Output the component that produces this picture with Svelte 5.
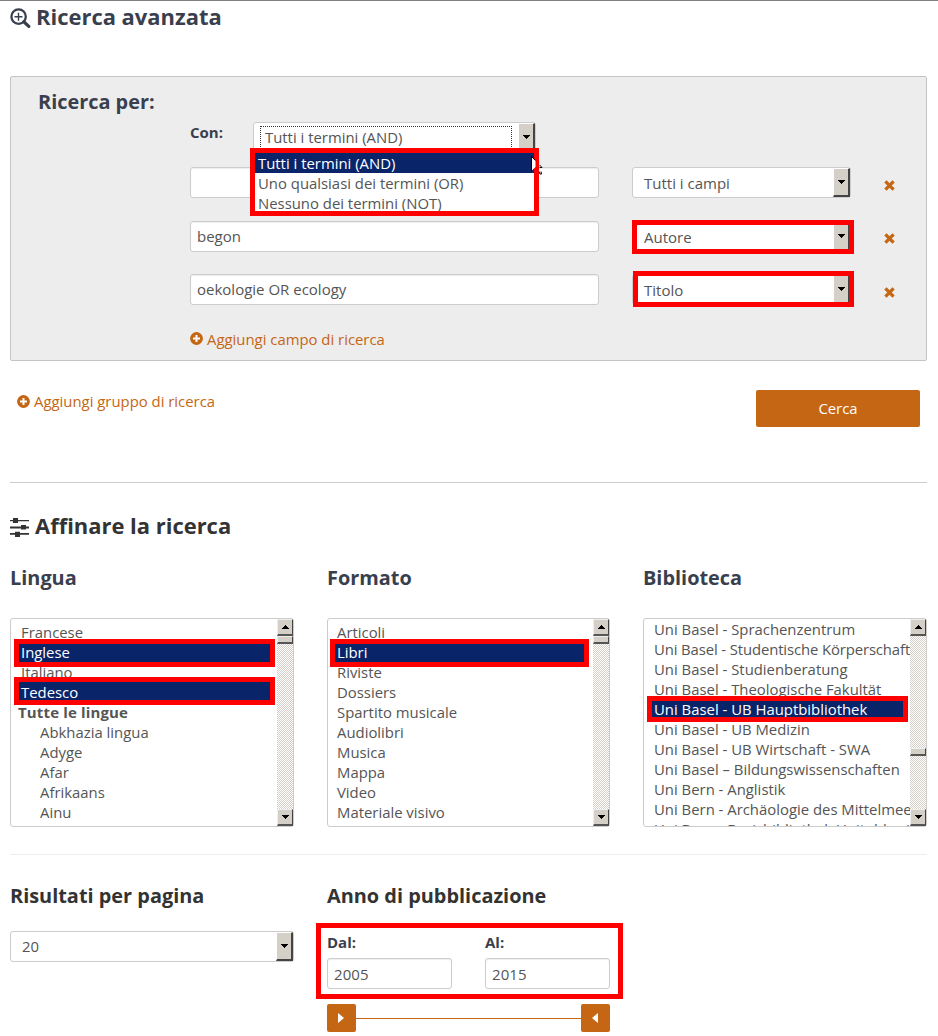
<script>
  const terms = ['Tutti i termini (AND)', 'Uno qualsiasi dei termini (OR)', 'Nessuno dei termini (NOT)'];
  const rows = [
    { value: '', field: 'Tutti i campi', mark: '' },
    { value: 'begon', field: 'Autore', mark: 'author' },
    { value: 'oekologie OR ecology', field: 'Titolo', mark: 'title' }
  ];
  const filters = [
    {
      title: 'Lingua', kind: 'lang', sel: ['Inglese', 'Tedesco'], marks: ['m1', 'm2'],
      items: ['Francese', 'Inglese', 'Italiano', 'Tedesco', '*Tutte le lingue', '>Abkhazia lingua', '>Adyge', '>Afar', '>Afrikaans', '>Ainu']
    },
    {
      title: 'Formato', kind: 'format', sel: ['Libri'], marks: ['m3'],
      items: ['Articoli', 'Libri', 'Riviste', 'Dossiers', 'Spartito musicale', 'Audiolibri', 'Musica', 'Mappa', 'Video', 'Materiale visivo']
    },
    {
      title: 'Biblioteca', kind: 'library', sel: ['Uni Basel - UB Hauptbibliothek'], marks: ['m4'],
      items: ['Uni Basel - Sprachenzentrum', 'Uni Basel - Studentische Körperschaft', 'Uni Basel - Studienberatung', 'Uni Basel - Theologische Fakultät', 'Uni Basel - UB Hauptbibliothek', 'Uni Basel - UB Medizin', 'Uni Basel - UB Wirtschaft - SWA', 'Uni Basel – Bildungswissenschaften', 'Uni Bern - Anglistik', 'Uni Bern - Archäologie des Mittelmee', 'Uni Bern - Basisbibliothek Unitobler (']
    }
  ];
</script>

{#snippet arrow(up)}
  <svg width="7" height="4" viewBox="0 0 7 4" shape-rendering="crispEdges"><path d={up ? 'M3 0h1v1h1v1h1v1h1v1H0V3h1V2h1V1h1z' : 'M0 0h7v1H6v1H5v1H4v1H3V3H2V2H1V1H0z'} fill="#000" /></svg>
{/snippet}

{#snippet plus()}
  <svg class="plus" width="13" height="13" viewBox="0 0 13 13"><circle cx="6.5" cy="6.5" r="6.4" fill="#c56614" /><path d="M6.5 3v7M3 6.5h7" stroke="#fff" stroke-width="2" /></svg>
{/snippet}

<main>
  <h1>
    <svg width="21" height="21" viewBox="0 0 21 21" fill="none" stroke="#3a3f4e"><circle cx="8.6" cy="8.6" r="7.2" stroke-width="2.3" /><path d="M13.8 13.8l5 4.6" stroke-width="3.2" stroke-linecap="round" /><path d="M8.5 4.7v8M4.5 8.7h8" stroke-width="1.4" /></svg>
    <span>Ricerca avanzata</span>
  </h1>

  <section class="panel">
    <h2>Ricerca per:</h2>
    <div class="fields">
      <div class="con">
        <b>Con:</b>
        <div class="select open">
          <span class="focus">Tutti i termini (AND)</span><i class="drop">{@render arrow(false)}</i>
          <ul class="menu">
            {#each terms as t, i}<li class:active={i === 0}>{t}</li>{/each}
          </ul>
          <svg class="cursor" width="12" height="20" viewBox="0 0 12 20">
            <path d="M.5 .5v14.5l4-4V4.5z" fill="#fff" />
            <path d="M.5 0v15.5M.5 .5l4 4" stroke="#000" fill="none" />
            <path d="M8.5 9l2.5 2.5H8.5M8 15.5l1 2.5h1.5l-.5-2.5" stroke="#000" fill="#fff" />
          </svg>
        </div>
      </div>
      {#each rows as r}
        <div class="row">
          <div class="input">{r.value}</div>
          <div class="select"><span>{r.field}</span><i class="drop">{@render arrow(false)}</i>
            {#if r.mark}<em class="mark {r.mark}"></em>{/if}
          </div>
          <svg class="x" width="11" height="11" viewBox="0 0 10 10"><path d="M1.3 1.3l7.4 7.4M8.7 1.3L1.3 8.7" stroke="#c56614" stroke-width="3" /></svg>
        </div>
      {/each}
      <a class="add">{@render plus()}<span>Aggiungi campo di ricerca</span></a>
    </div>
  </section>

  <div class="actions">
    <a class="add group">{@render plus()}<span>Aggiungi gruppo di ricerca</span></a>
    <button>Cerca</button>
  </div>

  <h1 class="refine">
    <svg width="19" height="19" viewBox="0 0 19 19" fill="#333"><path d="M0 2h19v1.2H0zM0 8.4h19v2H0zM0 15h19v1.8H0zM3 0h5v5H3zM11 6.9h5v4.6h-5zM5 13.7h5V19H5z" /></svg>
    <span>Affinare la ricerca</span>
  </h1>

  <div class="grid">
    {#each filters as f}
      <div>
        <h3>{f.title}</h3>
        <div class="list {f.kind}">
          <ul>
            {#each f.items as it}
              <li class:sel={f.sel.includes(it)} class:head={it[0] === '*'} class:sub={it[0] === '>'}>{it.replace(/^[*>]/, '')}</li>
            {/each}
          </ul>
          <div class="bar">
            <i class="btn">{@render arrow(true)}</i>
            <i class="thumb"></i>
            <i class="btn end">{@render arrow(false)}</i>
          </div>
          {#each f.marks as m}<em class="mark {m}"></em>{/each}
        </div>
      </div>
    {/each}
  </div>

  <div class="grid bottom">
    <div>
      <h3>Risultati per pagina</h3>
      <div class="select"><span>20</span><i class="drop">{@render arrow(false)}</i></div>
    </div>
    <div>
      <h3>Anno di pubblicazione</h3>
      <div class="years">
        <div><b>Dal:</b><div class="input">2005</div></div>
        <div><b>Al:</b><div class="input">2015</div></div>
        <em class="mark m5"></em>
      </div>
      <div class="slider">
        <i><svg width="6" height="10" viewBox="0 0 6 10"><path d="M0 0l6 5-6 5z" fill="#fff" /></svg></i>
        <s></s>
        <i><svg width="6" height="10" viewBox="0 0 6 10"><path d="M6 0L0 5l6 5z" fill="#fff" /></svg></i>
      </div>
    </div>
  </div>
</main>

<style>
  :global(body) { background: #fff; }
  * { box-sizing: border-box; }
  main { height: 1036px; overflow: hidden; border-top: 1px solid #808080; padding: 0 11px 0 10px; font: 14.88px/20px 'Open Sans', sans-serif; color: #555; }
  h1, h2, h3, ul { margin: 0; padding: 0; }
  ul { list-style: none; }
  svg { display: block; flex: none; }
  h1, h2, h3, b { color: #3a3f4e; font-weight: 700; }
  h1 { display: flex; align-items: center; height: 30px; font-size: 21.95px; gap: 5px; white-space: nowrap; }
  h1 svg { margin-top: 4px; }
  h1 span { padding-top: 2px; }
  .panel { margin-top: 45px; height: 285px; border: 1px solid #c2c5c5; border-radius: 2px; background: #ededed; padding: 15px 0 0 27px; }
  h2, h3 { font-size: 19.9px; line-height: 20px; white-space: nowrap; }
  .fields { margin: 10px 0 0 152px; }
  b { font-size: 15px; }
  .con { display: flex; height: 45px; }
  .con b { width: 63px; line-height: 20px; }
  .select { position: relative; display: flex; height: 31px; border: 1px solid #ccc; border-radius: 3px; background: #fff; }
  .select > span { flex: 1; padding-left: 11px; line-height: 29px; white-space: nowrap; }
  .drop { width: 17px; height: 29px; background: #d4d0c8; border: 1px solid #fff; border-right: 2px solid #444; border-bottom: 2px solid #444; display: flex; align-items: center; justify-content: center; }
  .open { width: 283px; height: 31px; z-index: 3; }
  .select > .focus { margin: 3px 6px 3px 6px; padding-left: 4px; border: 1px dotted #333; line-height: 21px; height: 25px; }
  .menu { position: absolute; left: -4px; top: 25px; width: 289px; height: 68px; border: 5px solid #f00; background: #fff; overflow: hidden; }
  .menu li { height: 20px; line-height: 20px; padding-left: 3px; white-space: nowrap; }
  .menu li.active { background: #0a246a; color: #fff; }
  .cursor { position: absolute; left: 277px; top: 33px; }
  .row { display: flex; height: 53.5px; align-items: flex-start; }
  .input { height: 31px; border: 1px solid #ccc; border-radius: 3px; background: #fff; padding-left: 6px; font-size: 15px; line-height: 29px; box-shadow: inset 0 1px 1px #eee; white-space: nowrap; }
  .row .input { width: 409px; margin-right: 33px; }
  .row .select { width: 219px; margin-right: 33px; font-size: 15px; }
  .row .select > span { line-height: 30px; }
  .x { margin-top: 12.5px; }
  .add { display: flex; align-items: center; gap: 4px; color: #c56614; height: 20px; white-space: nowrap; }
  .row + .add { margin-top: 1px; }
  .actions { height: 122px; padding: 29px 7px 0 7px; border-bottom: 1px solid #ccc; display: flex; justify-content: space-between; align-items: flex-start; }
  .group { margin-top: 1px; }
  button { width: 164px; height: 37px; border: 0; border-radius: 2px; background: #c56614; color: #fff; font: 14.88px 'Open Sans', sans-serif; padding: 0 0 2px; }
  .refine { margin-top: 27px; gap: 6px; }
  .refine span { color: #333; }
  .grid { display: grid; grid-template-columns: 284px 283px 284px; column-gap: 33px; }
  .refine + .grid { margin-top: 28px; height: 287px; border-bottom: 1px solid #eee; }
  .list { position: relative; display: flex; height: 209px; margin-top: 30px; border: 1px solid #ccc; border-radius: 3px; }
  .list ul { flex: 1; min-width: 0; overflow: hidden; padding: 4px 3px 0 4px; }
  .library ul { padding: 1px 0 0 4px; }
  .list li { height: 20px; padding-left: 5px; line-height: 19px; white-space: nowrap; }
  .lang li { padding-left: 6px; }
  .library li { padding-left: 6px; }
  .library li:nth-child(2) { letter-spacing: -.12px; }
  .list li.sel { background: #0a246a; color: #fff; box-shadow: 0 -1px #0a246a; }
  .format li.sel { margin-right: 3px; }
  .library li.sel { margin-right: 3px; }
  .list li.head { font-weight: 700; font-size: 15px; padding-left: 3px; letter-spacing: .15px; }
  .list li.sub { padding-left: 25px; }
  .bar { width: 16px; display: flex; flex-direction: column; background: repeating-conic-gradient(#d4d0c8 0 25%, #fff 0 50%) 0 0 / 2px 2px; }
  .btn, .thumb { height: 17px; background: #d4d0c8; border: 1px solid #eee; border-right-color: #444; border-bottom: 2px solid #555; display: flex; align-items: center; justify-content: center; }
  .thumb { height: 8px; }
  .library .thumb { margin-top: 112px; }
  .btn.end { margin-top: auto; }
  .mark { position: absolute; border: 5px solid #f00; }
  .author { left: -1px; top: -2px; width: 222px; height: 34px; }
  .title { left: 0; top: -4px; width: 221px; height: 36px; }
  .m1, .m2 { left: 3px; top: 20px; width: 261px; height: 28px; }
  .m2 { top: 58px; }
  .m3 { left: 2px; top: 20px; width: 259px; height: 28px; }
  .m4 { left: 3px; top: 77px; width: 261px; height: 26px; }
  .bottom { margin-top: 31px; }
  .bottom h3 { color: #333; }
  .bottom .select { margin-top: 25px; }
  .years { position: relative; display: grid; grid-template-columns: 125px 125px; justify-content: space-between; margin-top: 26px; }
  .years b { display: block; height: 26px; line-height: 20px; }
  .years .input { letter-spacing: .1px; line-height: 30px; }
  .m5 { left: -11px; top: -9px; width: 307px; height: 76px; }
  .slider { margin-top: 15px; display: flex; align-items: center; }
  .slider i { width: 29px; height: 28px; border-radius: 2px; background: #c56614; display: flex; align-items: center; justify-content: center; padding-right: 1px; }
  .slider s { flex: 1; height: 1px; background: #c56614; }
</style>
